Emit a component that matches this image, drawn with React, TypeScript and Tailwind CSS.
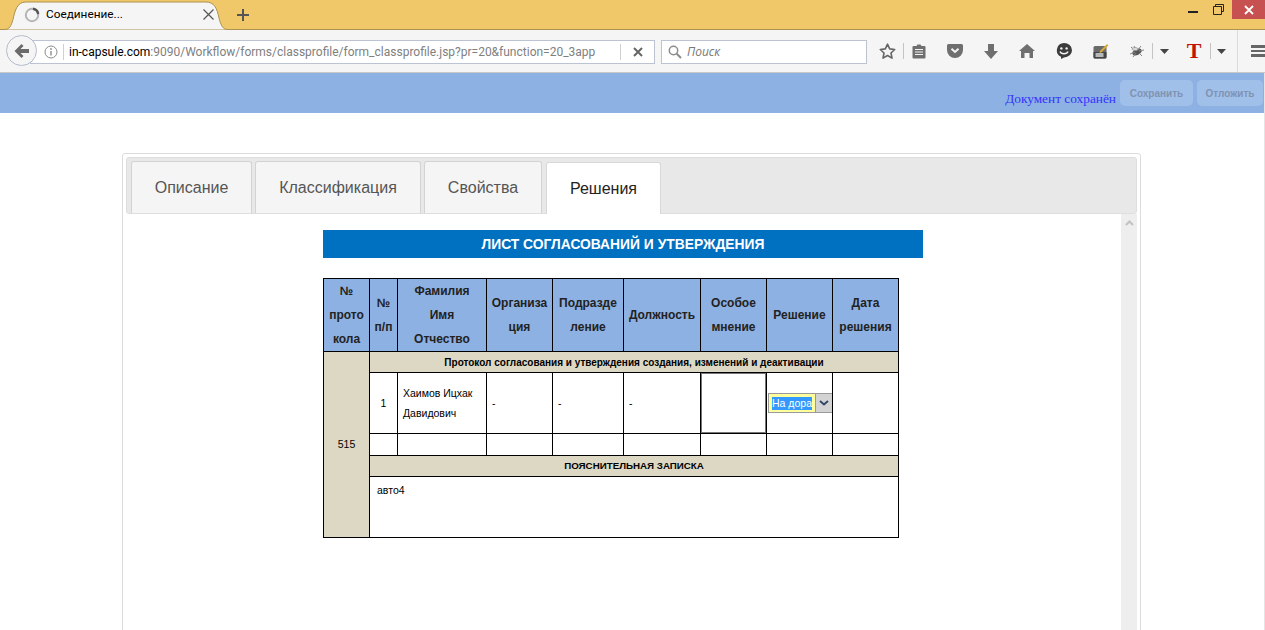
import React from "react";

const sans = "font-['Liberation_Sans',Arial,sans-serif]";

function Ico({ w = 36, children, cls = "" }: { w?: number; children: React.ReactNode; cls?: string }) {
  return <div className={`flex items-center justify-center shrink-0 h-full ${cls}`} style={{ width: w }}>{children}</div>;
}
const Sep = ({ h = "h-[16px]" }: { h?: string }) => <div className={`w-px ${h} bg-[#c4c4c4] shrink-0`} />;
const Caret = () => (
  <svg width="9" height="5" viewBox="0 0 9 5"><path d="M0 0h9L4.5 5z" fill="#444" /></svg>
);

function Tab({ label, active, w, cls = "" }: { label: string; active?: boolean; w: number; cls?: string }) {
  return (
    <div
      style={{ width: w }}
      className={`h-[52px] shrink-0 flex items-center justify-center rounded-t-[3px] border border-b-0 text-[16px] ${sans} ${cls} ${active ? "bg-white text-[#222] border-[#d8d8d8] -mb-px" : "bg-[#f5f5f5] text-[#555] border-[#d3d3d3]"}`}
    >
      {label}
    </div>
  );
}

const th = "border border-black bg-[#8db1e2] text-center align-middle font-bold text-[12px] leading-[24px] text-[#222] p-0";
const td = "border border-black bg-white text-[10.5px] leading-[20px] text-black p-0";
const sect = "border border-black bg-[#ddd8c4] text-center font-bold text-black p-0";

export default function App() {
  return (
    <div className={`relative w-[1265px] h-[630px] overflow-hidden bg-white ${sans}`}>
      {/* title strip */}
      <div className="relative flex h-[30px] bg-[#f0c869] border-b border-[#ad9350]">
        <svg className="absolute left-0 top-0" width="240" height="30" viewBox="0 0 240 30">
          <path d="M0 29.5h5c4 0 6-3 8-10 2-9 4-17.5 13-17.5h180c8 0 11 6 13 16 2 8 4 11.5 9 11.5" fill="#f5f5f5" stroke="#ad9350" />
        </svg>
        <div className="relative flex items-center h-[29px] pl-[24px] w-full">
          <svg width="16" height="16" viewBox="0 0 16 16" className="shrink-0">
            <circle cx="8" cy="8" r="6.2" fill="none" stroke="#b5b5b5" strokeWidth="2" />
            <path d="M9 1.8A6.2 6.2 0 0 1 14.2 7" fill="none" stroke="#555" strokeWidth="2.4" />
          </svg>
          <span className="ml-[6px] w-[157px] shrink-0 font-['Roboto',sans-serif] text-[11.8px] text-black">Соединение...</span>
          <svg width="11" height="11" viewBox="0 0 11 11" className="shrink-0">
            <path d="M0.5 0.5l10 10M10.5 0.5l-10 10" stroke="#555" strokeWidth="1.2" />
          </svg>
          <svg width="12" height="12" viewBox="0 0 12 12" className="ml-[23px] shrink-0">
            <path d="M6 0v12M0 6h12" stroke="#555" strokeWidth="2" />
          </svg>
          <div className="ml-auto flex items-start self-start h-[19px]">
            <div className="w-[10px] h-[2px] bg-[#222] mt-[11px] mr-[15px]" />
            <svg width="11" height="11" viewBox="0 0 11 11" className="mt-[4px] mr-[8px]">
              <path d="M2.5 2.5V.5h8v7h-2M.5 2.5h8v8h-8z" fill="none" stroke="#222" />
            </svg>
            <div className="w-[33px] h-[19px] bg-[#c75050] flex items-center justify-center">
              <svg width="10" height="10" viewBox="0 0 10 10"><path d="M1 1l8 8M9 1L1 9" stroke="#fff" strokeWidth="1.8" /></svg>
            </div>
          </div>
        </div>
      </div>

      {/* nav bar */}
      <div className="relative flex items-center h-[43px] bg-[#f5f5f5] border-b border-[#c8c8c8]">
        <div className="absolute left-[6px] top-[5px] w-[31px] h-[31px] rounded-full border border-[#b4bccb] bg-[#f5f5f5] flex items-center justify-center z-10">
          <svg width="16" height="14" viewBox="0 0 16 14"><path d="M7.5 0l2 2-3 3H15v4H6.5l3 3-2 2L0.5 7z" fill="#6b6b6b" /></svg>
        </div>
        <div className="ml-[30px] mt-[1px] w-[625px] h-[24px] bg-white border border-[#bcc3d2] flex items-center shrink-0">
          <svg width="14" height="14" viewBox="0 0 14 14" className="ml-[13px] shrink-0">
            <circle cx="7" cy="7" r="6" fill="none" stroke="#8c8c8c" />
            <path d="M7 6v4.5" stroke="#8c8c8c" strokeWidth="1.4" />
            <circle cx="7" cy="4" r="0.9" fill="#8c8c8c" />
          </svg>
          <div className="w-px h-[16px] bg-[#d0d0d0] ml-[5px] shrink-0" />
          <div className="ml-[5px] w-[526px] overflow-hidden whitespace-nowrap font-['Roboto',sans-serif] text-[12px] text-[#808080] shrink-0">
            <span className="text-black">in-capsule.com</span>:9090/Workflow/forms/classprofile/form_classprofile.jsp?pr=20&amp;function=20_3approve
          </div>
          <div className="w-px h-[16px] bg-[#d0d0d0] ml-[25px] shrink-0" />
          <svg width="10" height="10" viewBox="0 0 10 10" className="ml-[12px] shrink-0"><path d="M1 1l8 8M9 1L1 9" stroke="#666" strokeWidth="2" /></svg>
        </div>
        <div className="ml-[6px] mt-[1px] w-[206px] h-[24px] bg-white border border-[#bcc3d2] flex items-center shrink-0">
          <svg width="14" height="14" viewBox="0 0 14 14" className="ml-[6px] shrink-0">
            <circle cx="5.5" cy="5.5" r="4.2" fill="none" stroke="#8c8c8c" strokeWidth="1.5" />
            <path d="M8.7 8.7L13 13" stroke="#8c8c8c" strokeWidth="2" />
          </svg>
          <span className="ml-[5px] font-['Open_Sans',sans-serif] italic text-[12px] text-[#777]">Поиск</span>
        </div>
        <div className="flex items-center h-full ml-[4px]">
          <Ico w={32}>
            <svg width="17" height="16" viewBox="0 0 17 16"><path d="M8.5 1.2l2.2 4.7 5 .6-3.7 3.5 1 5.1-4.5-2.6-4.5 2.6 1-5.1L1.3 6.5l5-.6z" fill="none" stroke="#666" strokeWidth="1.6" strokeLinejoin="round" /></svg>
          </Ico>
          <Sep />
          <Ico w={30}>
            <svg width="14" height="15" viewBox="0 0 14 15"><path d="M1.5 2h3l1-1.5h3l1 1.5h3a1 1 0 0 1 1 1v10.5a1 1 0 0 1-1 1h-11a1 1 0 0 1-1-1V3a1 1 0 0 1 1-1z" fill="#6f6f6f" /><path d="M3 5.5h8M3 8h8M3 10.5h8" stroke="#f5f5f5" /></svg>
          </Ico>
          <Ico w={42}>
            <svg width="16" height="14" viewBox="0 0 16 14"><path d="M1.5 0h13A1.5 1.5 0 0 1 16 1.5V6A8 8 0 0 1 0 6V1.5A1.5 1.5 0 0 1 1.5 0z" fill="#6f6f6f" /><path d="M4.5 4.7L8 8l3.5-3.3" fill="none" stroke="#f5f5f5" strokeWidth="2" /></svg>
          </Ico>
          <Ico w={30}>
            <svg width="14" height="15" viewBox="0 0 14 15"><path d="M4 0h6v7h4l-7 8-7-8h4z" fill="#6f6f6f" /></svg>
          </Ico>
          <Ico w={42}>
            <svg width="16" height="14" viewBox="0 0 16 14"><path d="M8 0l8 7h-2v7h-3.5V9h-5v5H2V7H0z" fill="#6f6f6f" /></svg>
          </Ico>
          <Ico w={32}>
            <svg width="16" height="16" viewBox="0 0 16 16"><path d="M8 0a8 7.2 0 0 1 0 14.4l-3 1.6v-2.3A7.2 7.2 0 0 1 8 0z" fill="#3c3c3c" /><circle cx="5.4" cy="5.4" r="1.2" fill="#f5f5f5" /><circle cx="10.6" cy="5.4" r="1.2" fill="#f5f5f5" /><path d="M4 8.5c1 3 7 3 8 0" fill="none" stroke="#f5f5f5" strokeWidth="1.3" /></svg>
          </Ico>
          <Ico w={42}>
            <svg width="16" height="16" viewBox="0 0 16 16"><rect x="0.5" y="3" width="13" height="12.5" rx="1.5" fill="#6a6a6a" /><path d="M0.5 9h13v5a1.5 1.5 0 0 1-1.5 1.5H2A1.5 1.5 0 0 1 .5 14z" fill="#454545" /><path d="M7 8l7-7 1.4 1.4-7 7-2 .6z" fill="#d9a93a" /><rect x="2.5" y="10" width="8" height="4" fill="#b8b8b8" /></svg>
          </Ico>
          <Ico w={30}>
            <svg width="16" height="13" viewBox="0 0 16 13"><ellipse cx="8" cy="7" rx="5" ry="3" fill="#555" transform="rotate(-25 8 7)" /><path d="M2 2l5 4M5 1l3 5M12 1L9 5M1 9l5-2M4 12l3-4M13 11l-3-3M15 5l-5 1" stroke="#888" /><ellipse cx="6" cy="4" rx="3" ry="1.5" fill="#ddd" stroke="#777" strokeWidth=".5" /></svg>
          </Ico>
          <div className="flex items-center h-full">
            <Sep />
            <div className="ml-[7px] flex"><Caret /></div>
          </div>
          <Ico w={14} cls="ml-[18px]">
            <span className="font-['Liberation_Serif',serif] font-bold text-[22px] leading-none text-[#c01400]">T</span>
          </Ico>
          <div className="ml-[9px] flex items-center h-full">
            <Sep />
            <div className="ml-[6px] flex"><Caret /></div>
          </div>
          <div className="ml-[11px] w-px h-full bg-[#dcdcdc] shrink-0" />
          <div className="ml-[13px] flex flex-col gap-[2px] w-[14px] shrink-0">
            <div className="h-[2.5px] bg-[#666]" />
            <div className="h-[2.5px] bg-[#666]" />
            <div className="h-[2.5px] bg-[#666]" />
          </div>
        </div>
      </div>

      {/* blue toolbar */}
      <div className="flex justify-end items-start h-[40px] bg-[#8db1e2] pr-[2px] pt-[7px]">
        <span className="font-['Liberation_Serif',serif] text-[13.33px] leading-none text-[#3333ff] mt-[12px] mr-[4px]">Документ сохранён</span>
        <div className="w-[73px] h-[26px] rounded-[5px] bg-[#a1c0e9] flex items-center justify-center text-[10px] font-bold text-[#7f93b2]">Сохранить</div>
        <div className="ml-[4px] w-[66px] h-[26px] rounded-[5px] bg-[#a1c0e9] flex items-center justify-center text-[10px] font-bold text-[#7f93b2]">Отложить</div>
      </div>

      {/* panel */}
      <div className="ml-[122px] mt-[40px] w-[1019px] h-[600px] rounded-[3px] border border-[#dcdcdc] p-[3px]">
        <div className="flex items-end gap-[3px] h-[57px] bg-[#e8e8e8] rounded-[3px] border border-[#dedede] pl-[4px]">
          <Tab label="Описание" w={121} />
          <Tab label="Классификация" w={166} />
          <Tab label="Свойства" w={118} />
          <Tab label="Решения" w={115} active cls="ml-px" />
        </div>
        <div className="flex h-[500px]">
          <div className="flex-1 pl-[197px] pt-[16px]">
            <div className="w-[600px] h-[28px] bg-[#0070c0] flex items-center justify-center text-[13.85px] font-bold text-white">
              ЛИСТ СОГЛАСОВАНИЙ И УТВЕРЖДЕНИЯ
            </div>
            <table className="mt-[20px] w-[575px] table-fixed border-collapse">
              <colgroup>
                <col className="w-[46px]" />
                <col className="w-[28px]" />
                <col className="w-[89px]" />
                <col className="w-[66px]" />
                <col className="w-[71px]" />
                <col className="w-[77px]" />
                <col className="w-[66px]" />
                <col className="w-[66px]" />
                <col className="w-[66px]" />
              </colgroup>
              <tbody>
                <tr className="h-[73px]">
                  <td className={th}>№<br />прото<br />кола</td>
                  <td className={th}>№<br />п/п</td>
                  <td className={th}>Фамилия<br />Имя<br />Отчество</td>
                  <td className={th}>Организа<br />ция</td>
                  <td className={th}>Подразде<br />ление</td>
                  <td className={th}>Должность</td>
                  <td className={th}>Особое<br />мнение</td>
                  <td className={th}>Решение</td>
                  <td className={th}>Дата<br />решения</td>
                </tr>
                <tr className="h-[21px]">
                  <td rowSpan={6} className="border border-black bg-[#ddd8c4] text-center text-[10.5px] text-black p-0 align-middle">515</td>
                  <td colSpan={8} className={`${sect} text-[10px]`}>Протокол согласования и утверждения создания, изменений и деактивации</td>
                </tr>
                <tr className="h-[61px]">
                  <td className={`${td} text-center`}>1</td>
                  <td className={`${td} pl-[5px]`}>Хаимов Ицхак<br />Давидович</td>
                  <td className={`${td} pl-[5px]`}>-</td>
                  <td className={`${td} pl-[5px]`}>-</td>
                  <td className={`${td} pl-[5px]`}>-</td>
                  <td className={`${td} align-middle`}>
                    <div className="w-[65px] h-[60px] border-[1.5px] border-[#767676] bg-white" />
                  </td>
                  <td className={td}>
                    <div className="ml-px w-[65px] h-[20px] border border-[#999] flex bg-[#ffff9e]">
                      <div className="flex-1 flex items-center pl-[3px] pr-[2px] overflow-hidden">
                        <span className="bg-[#3399ff] text-white text-[10.5px] leading-[13px] whitespace-nowrap overflow-hidden w-[40px]">На дора</span>
                      </div>
                      <div className="w-[17px] bg-[#d3d3d3] border-l border-[#999] flex items-center justify-center">
                        <svg width="10" height="6" viewBox="0 0 10 6"><path d="M1 1l4 3.5L9 1" fill="none" stroke="#33476b" strokeWidth="2" /></svg>
                      </div>
                    </div>
                  </td>
                  <td className={td}></td>
                </tr>
                <tr className="h-[22px]">
                  <td className={td}></td><td className={td}></td><td className={td}></td><td className={td}></td><td className={td}></td><td className={td}></td><td className={td}></td><td className={td}></td>
                </tr>
                <tr className="h-[21px]">
                  <td colSpan={8} className={`${sect} text-[9.75px]`}>ПОЯСНИТЕЛЬНАЯ ЗАПИСКА</td>
                </tr>
                <tr className="h-[61px]">
                  <td colSpan={8} className={`${td} align-top pl-[7px] pt-[3px]`}>авто4</td>
                </tr>
              </tbody>
            </table>
          </div>
          <div className="w-[16px] bg-[#eeeeee] flex justify-center pt-[6px] shrink-0">
            <svg width="9" height="6" viewBox="0 0 9 6"><path d="M1 5l3.5-3.5L8 5" fill="none" stroke="#c2c2c2" strokeWidth="2" /></svg>
          </div>
        </div>
      </div>
      <div className="absolute right-0 top-[73px] bottom-0 w-px bg-[#e4e4e4]" />
    </div>
  );
}
